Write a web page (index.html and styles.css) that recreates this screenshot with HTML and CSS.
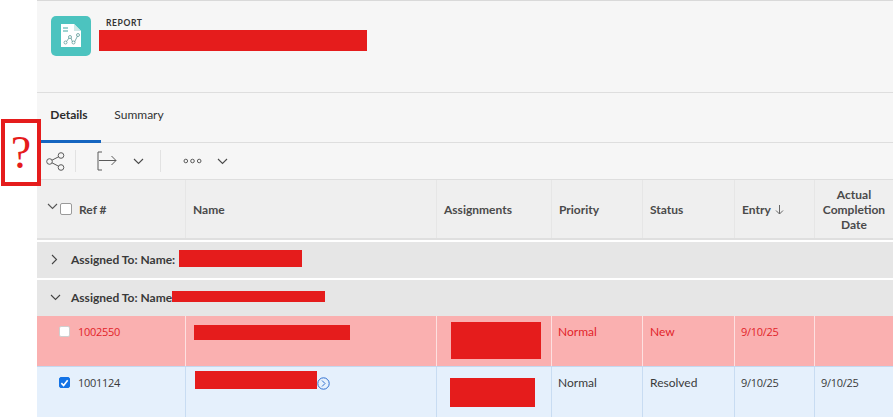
FILE: index.html
```html
<!DOCTYPE html>
<html lang="en">
<head>
<meta charset="utf-8">
<title>Report</title>
<link rel="stylesheet" href="styles.css">
</head>
<body>
<main class="main">
  <header class="header">
    <div class="logo">
      <svg width="24" height="26" viewBox="0 0 24 26" fill="none">
        <path d="M2 1H15L22 8V24H2Z" fill="#fff"/>
        <path d="M15 1V8H22" fill="#cfe9e7"/>
        <path d="M4 5H9M4 8H9" stroke="#3fa8a3" stroke-width="1.200"/>
        <path d="M7.500 18.500L10 15M12 15L13.500 19M15.500 19L18.500 13" stroke="#5f9c99" stroke-width="0.800"/>
        <circle cx="6.500" cy="19.500" r="1.500" stroke="#5f9c99" stroke-width="0.800"/>
        <circle cx="11" cy="14" r="1.500" stroke="#5f9c99" stroke-width="0.800"/>
        <circle cx="14.500" cy="19.500" r="1.500" stroke="#5f9c99" stroke-width="0.800"/>
        <circle cx="19" cy="12" r="1.500" stroke="#5f9c99" stroke-width="0.800"/>
      </svg>
    </div>
    <div class="report-label">REPORT</div>
  </header>
  <nav class="tabs">
    <a class="tab tab-active">Details</a>
    <a class="tab">Summary</a>
  </nav>
  <div class="toolbar">
    <button class="tool tool-share">
      <svg width="19" height="19" viewBox="0 0 19 19" fill="none" stroke="#5a5a5a" stroke-width="1">
        <circle cx="3.500" cy="9.500" r="2.800"/><circle cx="15" cy="3.500" r="2.800"/><circle cx="15" cy="15.500" r="2.800"/>
        <path d="M6 8.200L12.500 4.800M6 10.800L12.500 14.200"/>
      </svg>
    </button>
    <span class="divider"></span>
    <button class="tool tool-export">
      <svg width="20" height="20" viewBox="0 0 20 20" fill="none" stroke="#5a5a5a" stroke-width="1">
        <path d="M5 1H1V19H5M2 9.500H19M14.500 5L19 9.500L14.500 14"/>
      </svg>
    </button>
    <button class="tool tool-caret">
      <svg width="11" height="7" viewBox="0 0 11 7" fill="none" stroke="#4a4a4a" stroke-width="1.100"><path d="M1 1L5.500 5.500L10 1"/></svg>
    </button>
    <span class="divider divider-second"></span>
    <button class="tool tool-more">
      <svg width="19" height="6" viewBox="0 0 19 6" fill="none" stroke="#5a5a5a" stroke-width="1"><circle cx="2.800" cy="3" r="1.800"/><circle cx="9.500" cy="3" r="1.800"/><circle cx="16.200" cy="3" r="1.800"/></svg>
    </button>
    <button class="tool tool-caret tool-caret-last">
      <svg width="11" height="7" viewBox="0 0 11 7" fill="none" stroke="#4a4a4a" stroke-width="1.100"><path d="M1 1L5.500 5.500L10 1"/></svg>
    </button>
  </div>
  <div class="row head">
    <div class="cell cell-ref">
      <svg class="head-caret" width="11" height="7" viewBox="0 0 11 7" fill="none" stroke="#555" stroke-width="1.100"><path d="M1 1L5.500 5.500L10 1"/></svg>
      <span class="check"></span>
      <span>Ref #</span>
    </div>
    <div class="cell">Name</div>
    <div class="cell">Assignments</div>
    <div class="cell">Priority</div>
    <div class="cell">Status</div>
    <div class="cell cell-entry">Entry
      <svg width="9" height="11" viewBox="0 0 9 11" fill="none" stroke="#666" stroke-width="1"><path d="M4.500 1V10M1 6.500L4.500 10L8 6.500"/></svg>
    </div>
    <div class="cell cell-center">Actual Completion Date</div>
  </div>
  <div class="group group-first">
    <svg width="7" height="11" viewBox="0 0 7 11" fill="none" stroke="#444" stroke-width="1.100"><path d="M1 1L5.500 5.500L1 10"/></svg>
    <span>Assigned To: Name:</span>
  </div>
  <div class="group group-open">
    <svg width="11" height="7" viewBox="0 0 11 7" fill="none" stroke="#444" stroke-width="1.100"><path d="M1 1L5.500 5.500L10 1"/></svg>
    <span>Assigned To: Name</span>
  </div>
  <div class="row item item-late">
    <div class="cell"><span class="check check-row"></span><span class="num">1002550</span></div>
    <div class="cell"></div>
    <div class="cell"></div>
    <div class="cell">Normal</div>
    <div class="cell cell-status">New</div>
    <div class="cell"><span class="num">9/10/25</span></div>
    <div class="cell"></div>
  </div>
  <div class="row item item-selected">
    <div class="cell">
      <span class="check check-row check-on">
        <svg width="10" height="10" viewBox="0 0 10 10" fill="none" stroke="#fff" stroke-width="1.800"><path d="M1.500 5.200L4 7.800L8.500 2"/></svg>
      </span>
      <span class="num">1001124</span>
    </div>
    <div class="cell cell-name">
      <svg class="go" width="13" height="13" viewBox="0 0 13 13" fill="none" stroke="#2f6fd0" stroke-width="1"><circle cx="6.500" cy="6.500" r="5.700"/><path d="M5 3.500L8 6.500L5 9.500"/></svg>
    </div>
    <div class="cell"></div>
    <div class="cell">Normal</div>
    <div class="cell cell-status">Resolved</div>
    <div class="cell"><span class="num">9/10/25</span></div>
    <div class="cell"><span class="num">9/10/25</span></div>
  </div>
</main>
<div class="annotation"><span>?</span></div>
<div class="redact r-title"></div>
<div class="redact r-group1"></div>
<div class="redact r-group2"></div>
<div class="redact r-name1"></div>
<div class="redact r-assign1"></div>
<div class="redact r-name2"></div>
<div class="redact r-assign2"></div>
</body>
</html>
```
FILE: styles.css
```css
* { box-sizing: border-box; }
html, body { margin: 0; padding: 0; height: 417px; overflow: hidden; background: #fff; }
body { font-family: Lato, "Open Sans", sans-serif; font-size: 12px; color: #3a3a3a; position: relative; }
.main { margin-left: 37px; width: 856px; height: 417px; background: #f6f6f6; overflow: hidden; }

.header { height: 93px; border-top: 1px solid #d9d9d9; border-bottom: 1px solid #dedede; padding: 15px 0 0 14px; display: flex; align-items: flex-start; }
.logo { width: 40px; height: 40px; border-radius: 5px; background: #4cc3bf; display: flex; align-items: center; justify-content: center; }
.report-label { margin: 2px 0 0 15px; font-size: 8.500px; line-height: 11px; font-weight: 700; letter-spacing: 0.6px; color: #333; }

.tabs { height: 50px; display: flex; border-bottom: 1px solid #dedede; }
.tab { width: 64px; height: 50px; padding-top: 14px; text-align: center; line-height: 15px; color: #333; }
.tab-active { font-weight: 700; border-bottom: 3px solid #1565c0; color: #2c2c2c; }
.tab + .tab { width: 76px; }

.toolbar { height: 37px; display: flex; align-items: center; border-bottom: 1px solid #dedede; }
.tool { border: 0; background: none; padding: 0; display: flex; align-items: center; justify-content: center; }
.tool-share { margin-left: 9px; width: 19px; height: 19px; }
.divider { width: 1px; height: 22px; background: #e2e2e2; margin-left: 10px; }
.tool-export { margin-left: 21px; }
.tool-caret { margin-left: 16px; }
.divider-second { margin-left: 16px; }
.tool-more { margin-left: 22px; }
.tool-caret-last { margin-left: 15px; }

.row { display: grid; grid-template-columns: 148px 251px 115px 91px 92px 80px 79px; }
.cell { border-left: 1px solid #e6e6e6; padding: 0 7px; display: flex; align-items: center; }
.cell:first-child { border-left: 0; }

.head { height: 60px; background: #efefef; border-bottom: 2px solid #dfdfdf; font-weight: 700; color: #4a4a4a; }
.cell-ref { padding-left: 10px; position: relative; }
.head-caret { margin-top: -6px; }
.check { width: 12px; height: 12px; border: 1px solid #9a9a9a; border-radius: 2px; background: #fff; margin: 0 7px 0 2px; flex: none; display: flex; align-items: center; justify-content: center; }
.cell-entry { gap: 4px; }
.cell-center { padding: 0 4px; text-align: center; justify-content: center; line-height: 15px; }

.group { height: 38px; border-top: 2px solid #fff; background: #e6e6e6; display: flex; align-items: center; font-weight: 700; color: #3a3a3a; padding-bottom: 2px; }
.group svg { flex: none; }
.group-first { padding-left: 14px; }
.group-first span { margin-left: 13px; }
.group-open { padding-left: 13px; }
.group-open span { margin-left: 10px; }

.item { height: 50px; }
.item .cell { align-items: flex-start; padding: 8px 5px 0 6px; line-height: 15px; }
.item .cell-status { padding-left: 7px; }
.num { font-family: "Open Sans", sans-serif; font-size: 11px; letter-spacing: -0.3px; }
.item-late { background: #fab0b0; color: #e2242a; }
.item-late .cell { border-left-color: #fde0e0; }
.item-selected { height: 51px; background: #e5f0fc; border-top: 1px solid #c4d8ef; color: #3a3a3a; }
.item-selected .cell { border-left-color: #c8dcf2; }
.item .cell:first-child { padding-left: 22px; }
.check-row { margin: 2px 8px 0 0; width: 11px; height: 11px; border-color: #cfcfcf; }
.check-on { background: #1473e6; border-color: #1473e6; }
.cell-name { position: relative; }
.go { position: absolute; left: 131px; top: 10px; }

.annotation { position: absolute; left: 1px; top: 119px; width: 40px; height: 67px; border: 4px solid #e51c1c; background: #fff; color: #e51c1c; font-family: "Liberation Serif", serif; font-size: 46px; line-height: 59px; text-align: center; }

.redact { position: absolute; background: #e51c1c; }
.r-title { left: 99px; top: 30px; width: 268px; height: 21px; }
.r-group1 { left: 179px; top: 250px; width: 123px; height: 17px; }
.r-group2 { left: 172px; top: 291px; width: 153px; height: 11px; }
.r-name1 { left: 194px; top: 325px; width: 156px; height: 15px; }
.r-assign1 { left: 451px; top: 322px; width: 90px; height: 37px; }
.r-name2 { left: 195px; top: 371px; width: 122px; height: 18px; }
.r-assign2 { left: 450px; top: 378px; width: 85px; height: 29px; }
```
